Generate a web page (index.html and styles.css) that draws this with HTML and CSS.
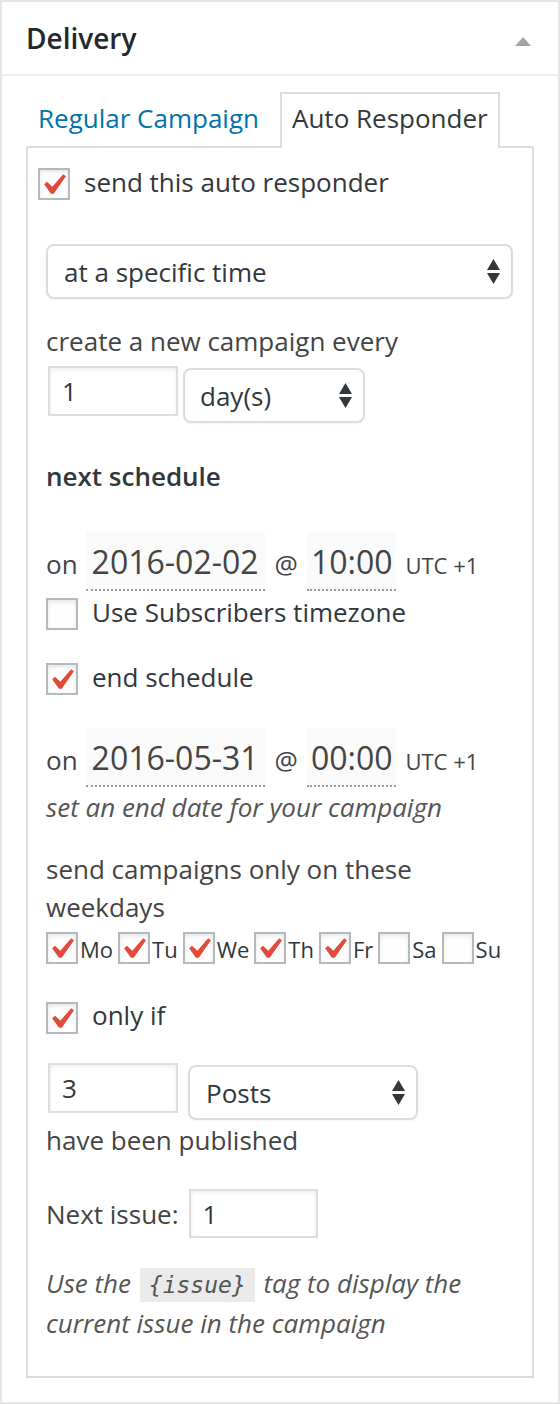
FILE: index.html
```html
<!DOCTYPE html>
<html>
<head>
<meta charset="utf-8">
<title>Delivery</title>
<link rel="stylesheet" href="styles.css">
</head>
<body>
<div class="postbox">
  <div class="hndle">
    <h3 class="title">Delivery</h3>
    <svg class="toggle" width="16" height="9" viewBox="0 0 16 9"><path d="M8 0L16 9H0z" fill="#a0a5aa"/></svg>
  </div>
  <div class="inside">
    <div class="tabs">
      <a class="tab tab-link">Regular Campaign</a>
      <span class="tab active">Auto Responder</span>
    </div>
    <div class="panel">
      <label class="cbrow first">
        <span class="cb"><svg width="28" height="28" viewBox="3.81 2.86 13.33 13.33"><path d="M14.83 4.89l1.34.94-5.81 8.38H9.02L5.78 9.67l1.34-1.25 2.57 2.4z" fill="#e14b3b"/></svg></span>
        <span class="cbtext">send this auto responder</span>
      </label>
      <div class="body">
        <div class="select wide"><span>at a specific time</span><svg class="arrows" width="13" height="25" viewBox="0 0 13 25"><path d="M6.5 0L13 11H0z M0 14h13L6.5 25z" fill="#32373c"/></svg></div>
        <p class="line create">create a new campaign every</p>
        <div class="controls every">
          <span class="input num">1</span>
          <div class="select unit"><span>day(s)</span><svg class="arrows" width="13" height="25" viewBox="0 0 13 25"><path d="M6.5 0L13 11H0z M0 14h13L6.5 25z" fill="#32373c"/></svg></div>
        </div>
        <p class="line strong">next schedule</p>
        <div class="datetime start">
          <span class="on">on</span>
          <span class="field date">2016-02-02</span>
          <span class="at">@</span>
          <span class="field time">10:00</span>
          <span class="tz">UTC +1</span>
        </div>
        <label class="cbrow tzrow">
          <span class="cb"></span>
          <span class="cbtext">Use Subscribers timezone</span>
        </label>
        <label class="cbrow endrow">
          <span class="cb"><svg width="28" height="28" viewBox="3.81 2.86 13.33 13.33"><path d="M14.83 4.89l1.34.94-5.81 8.38H9.02L5.78 9.67l1.34-1.25 2.57 2.4z" fill="#e14b3b"/></svg></span>
          <span class="cbtext">end schedule</span>
        </label>
        <div class="datetime end">
          <span class="on">on</span>
          <span class="field date">2016-05-31</span>
          <span class="at">@</span>
          <span class="field time">00:00</span>
          <span class="tz">UTC +1</span>
        </div>
        <p class="line desc enddesc">set an end date for your campaign</p>
        <p class="line weekdays-label">send campaigns only on these weekdays</p>
        <div class="weekdays">
          <label class="day"><span class="cb"><svg width="28" height="28" viewBox="3.81 2.86 13.33 13.33"><path d="M14.83 4.89l1.34.94-5.81 8.38H9.02L5.78 9.67l1.34-1.25 2.57 2.4z" fill="#e14b3b"/></svg></span><span class="dl">Mo</span></label>
          <label class="day"><span class="cb"><svg width="28" height="28" viewBox="3.81 2.86 13.33 13.33"><path d="M14.83 4.89l1.34.94-5.81 8.38H9.02L5.78 9.67l1.34-1.25 2.57 2.4z" fill="#e14b3b"/></svg></span><span class="dl">Tu</span></label>
          <label class="day"><span class="cb"><svg width="28" height="28" viewBox="3.81 2.86 13.33 13.33"><path d="M14.83 4.89l1.34.94-5.81 8.38H9.02L5.78 9.67l1.34-1.25 2.57 2.4z" fill="#e14b3b"/></svg></span><span class="dl">We</span></label>
          <label class="day"><span class="cb"><svg width="28" height="28" viewBox="3.81 2.86 13.33 13.33"><path d="M14.83 4.89l1.34.94-5.81 8.38H9.02L5.78 9.67l1.34-1.25 2.57 2.4z" fill="#e14b3b"/></svg></span><span class="dl">Th</span></label>
          <label class="day"><span class="cb"><svg width="28" height="28" viewBox="3.81 2.86 13.33 13.33"><path d="M14.83 4.89l1.34.94-5.81 8.38H9.02L5.78 9.67l1.34-1.25 2.57 2.4z" fill="#e14b3b"/></svg></span><span class="dl">Fr</span></label>
          <label class="day"><span class="cb"></span><span class="dl">Sa</span></label>
          <label class="day"><span class="cb"></span><span class="dl">Su</span></label>
        </div>
        <label class="cbrow onlyrow">
          <span class="cb"><svg width="28" height="28" viewBox="3.81 2.86 13.33 13.33"><path d="M14.83 4.89l1.34.94-5.81 8.38H9.02L5.78 9.67l1.34-1.25 2.57 2.4z" fill="#e14b3b"/></svg></span>
          <span class="cbtext">only if</span>
        </label>
        <div class="controls posts">
          <span class="input num">3</span>
          <div class="select type"><span>Posts</span><svg class="arrows" width="13" height="25" viewBox="0 0 13 25"><path d="M6.5 0L13 11H0z M0 14h13L6.5 25z" fill="#32373c"/></svg></div>
        </div>
        <p class="line published">have been published</p>
        <div class="issue">
          <span class="issue-label">Next issue:</span>
          <span class="input issue-input">1</span>
        </div>
        <p class="line desc issuedesc"><span>Use the</span> <code>{issue}</code> <span>tag to display the</span><br><span>current issue in the campaign</span></p>
      </div>
    </div>
  </div>
</div>
</body>
</html>
```

FILE: styles.css
```css
* { box-sizing: border-box; }
html, body { margin: 0; padding: 0; background: #fff; }
body {
  font-family: "Open Sans", "Noto Sans", sans-serif;
  font-size: 26px;
  color: #444;
}
.postbox {
  width: 560px;
  border: 2px solid #e5e5e5;
  background: #fff;
}
.hndle {
  display: flex;
  justify-content: space-between;
  align-items: flex-start;
  padding: 16px 27px 16px 24px;
  border-bottom: 2px solid #eee;
}
.title {
  margin: 0;
  font-size: 28px;
  font-weight: 600;
  line-height: 40px;
  color: #23282d;
}
.toggle { margin-top: 19px; }
.inside { padding: 16px 24px 24px; }
.tabs {
  display: flex;
  align-items: flex-end;
  margin-bottom: -2px;
}
.tab {
  display: block;
  padding: 4px 10px 10px;
  border: 2px solid transparent;
  border-bottom: 0;
  line-height: 40px;
}
.tab-link { color: #0073aa; text-decoration: none; margin-right: 9px; }
.tab.active {
  border-color: #ddd;
  background: #fff;
  color: #32373c;
  position: relative;
}
.panel {
  border: 2px solid #ddd;
  padding: 14px 0 33px 10px;
}
.body { margin-left: 8px; width: 467px; }
.line { margin: 0; line-height: 40px; }

/* checkboxes */
.cbrow { display: flex; align-items: flex-start; }
.cb {
  display: block;
  flex: none;
  width: 32px;
  height: 32px;
  border: 2px solid #b4b9be;
  background: #fefefe;
  box-shadow: inset 0 2px 4px rgba(0,0,0,.1);
  margin-top: 6px;
}
.cb svg { display: block; overflow: visible; }
.cbtext { line-height: 40px; margin-left: 14px; color: #32373c; }
.tzrow { margin-top: 1px; }
.endrow { margin-top: 25px; }
.onlyrow { margin-top: 31px; }
.onlyrow .cb { margin-top: 7px; }

/* selects and inputs */
.select {
  display: flex;
  align-items: center;
  justify-content: space-between;
  height: 55px;
  border: 2px solid #dcdcdc;
  border-radius: 8px;
  padding: 0 11px 0 16px;
  background: #fff;
  color: #32373c;
  line-height: 40px;
  box-shadow: 0 1px 2px rgba(0,0,0,.05);
}
.arrows { flex: none; }
.wide { margin-top: 42px; width: 467px; }
.create { margin-top: 22px; }
.controls { display: flex; align-items: flex-start; }
.every { margin-top: 5px; }
.input {
  display: flex;
  align-items: center;
  height: 50px;
  border: 2px solid #ddd;
  background: #fff;
  box-shadow: inset 0 2px 4px rgba(0,0,0,.07);
  color: #32373c;
  line-height: 40px;
}
.num { width: 130px; margin-left: 2px; padding: 0 12px; }
.unit { width: 182px; margin-left: 5px; margin-top: 2px; padding-left: 15px; }
.strong { margin-top: 33px; font-weight: 600; color: #32373c; }

/* date rows */
.datetime { display: flex; align-items: baseline; }
.start { margin-top: 36px; }
.end { margin-top: 31px; }
.on { line-height: 40px; }
.field {
  display: block;
  font-size: 32px;
  line-height: 48px;
  padding: 6px 6px 3px;
  background: #fafafa;
  border-bottom: 2px dotted #999;
  color: #444;
}
.date { margin-left: 8px; }
.at { margin-left: 10px; line-height: 40px; }
.time { margin-left: 9px; padding-left: 4px; padding-right: 4px; }
.tz { margin-left: 9px; font-size: 22px; }

.desc { font-style: italic; color: #555; }
.enddesc { margin-top: 0; }
.weekdays-label { margin-top: 23px; line-height: 38px; }

.weekdays { display: flex; margin-top: 6px; }
.day { display: flex; align-items: flex-start; margin-right: 5px; }
.day .cb { margin-top: 0; }
.dl { font-size: 22px; line-height: 30px; padding-top: 2px; margin-left: 2px; color: #32373c; }

.posts { margin-top: 28px; }
.type { width: 230px; margin-left: 10px; margin-top: 2px; padding-left: 16px; }
.published { margin-top: 0; }

.issue { display: flex; align-items: center; margin-top: 29px; }
.issue-label { line-height: 40px; }
.issue-input { width: 129px; height: 49px; margin-left: 10px; padding: 0 12px; }

.issuedesc { margin-top: 25px; }
code {
  display: inline-block;
  font-family: "DejaVu Sans Mono", "Liberation Mono", monospace;
  font-style: italic;
  font-size: 23px;
  line-height: 28px;
  background: #eaeaea;
  padding: 3px 9px;
  margin: 0 2px;
  vertical-align: baseline;
  color: #555;
}
```
